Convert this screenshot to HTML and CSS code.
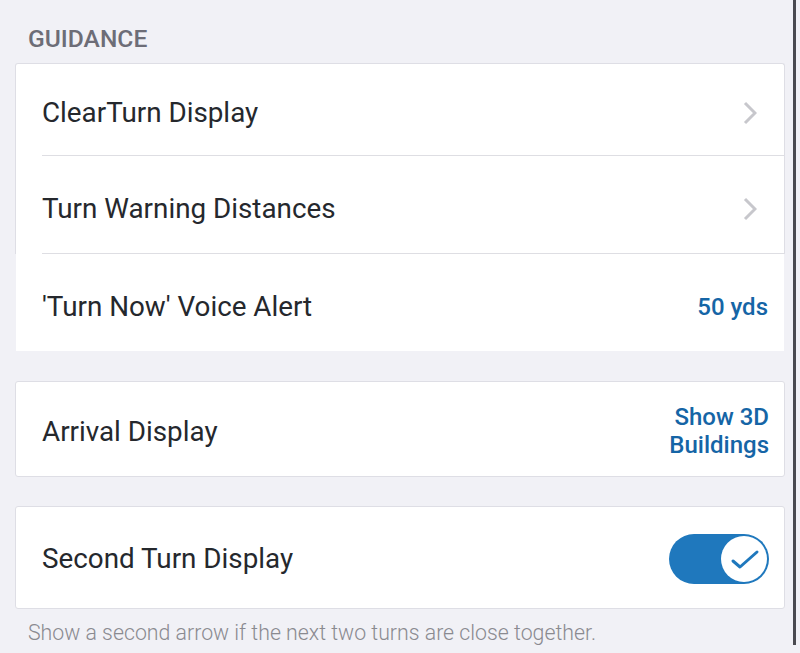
FILE: index.html
```html
<!DOCTYPE html>
<html>
<head>
<meta charset="utf-8">
<link rel="stylesheet" href="styles.css">
</head>
<body>
<div class="page">
  <div class="section-title">GUIDANCE</div>
  <div class="group">
    <div class="row row-first">
      <span class="label">ClearTurn Display</span>
      <svg class="chevron" width="14" height="24" viewBox="0 0 14 24"><polyline points="2,2 12,12 2,22" fill="none" stroke="#c7c7cc" stroke-width="3"/></svg>
    </div>
    <div class="row">
      <span class="label">Turn Warning Distances</span>
      <svg class="chevron" width="14" height="24" viewBox="0 0 14 24"><polyline points="2,2 12,12 2,22" fill="none" stroke="#c7c7cc" stroke-width="3"/></svg>
    </div>
  </div>
  <div class="plain-row">
    <span class="label">'Turn Now' Voice Alert</span>
    <span class="value">50 yds</span>
  </div>

  <div class="card card-arrival">
    <span class="label">Arrival Display</span>
    <span class="value value-multi">Show 3D<br>Buildings</span>
  </div>

  <div class="card card-second">
    <span class="label">Second Turn Display</span>
    <div class="toggle">
      <div class="knob">
        <svg width="46" height="46" viewBox="0 0 46 46"><polyline points="12,25 19,31 36,16" fill="none" stroke="#1f78bd" stroke-width="3" stroke-linecap="round" stroke-linejoin="round"/></svg>
      </div>
    </div>
  </div>
  <div class="footnote">Show a second arrow if the next two turns are close together.</div>
</div>
<div class="scrollbar"></div>
</body>
</html>
```

FILE: styles.css
```css
html, body {
  margin: 0;
  padding: 0;
  background: #f1f1f6;
  font-family: Roboto, "Liberation Sans", sans-serif;
  overflow: hidden;
}

.page {
  padding: 0 15px;
  height: 653px;
  box-sizing: border-box;
}

.section-title {
  padding: 24px 13px 9px;
  line-height: 30px;
  font-size: 24.6px;
  font-weight: 500;
  color: #6d6d77;
}

.group {
  background: #fff;
  border: 1px solid #dedee5;
  border-bottom: none;
  border-radius: 3px 3px 0 0;
}

.row {
  display: flex;
  align-items: center;
  justify-content: space-between;
  margin-left: 26px;
  height: 98px;
  padding: 9px 27px 0 0;
  box-sizing: border-box;
  border-bottom: 1px solid #dedee3;
}

.row-first {
  height: 92px;
  padding-top: 6px;
}

.label {
  font-size: 27.8px;
  color: #25282d;
  line-height: 32px;
}

.value {
  font-size: 24px;
  font-weight: 500;
  color: #1565a6;
  text-align: right;
  line-height: 28px;
}

.value-multi {
  margin-top: -2px;
}

.plain-row {
  display: flex;
  align-items: center;
  justify-content: space-between;
  margin: 0 1px;
  height: 97px;
  padding: 9px 16px 0 26px;
  box-sizing: border-box;
  background: #fff;
}

.card {
  display: flex;
  align-items: center;
  justify-content: space-between;
  background: #fff;
  border: 1px solid #dedee5;
  border-radius: 3px;
  padding: 0 15px 0 26px;
  box-sizing: border-box;
}

.card-arrival {
  margin-top: 30px;
  height: 96px;
  padding-top: 6px;
}

.card-second {
  margin-top: 29px;
  height: 103px;
  padding-top: 3px;
}

.toggle {
  width: 100px;
  height: 50px;
  border-radius: 25px;
  background: #1f78bd;
  display: flex;
  align-items: center;
  justify-content: flex-end;
  padding-right: 2px;
  box-sizing: border-box;
}

.knob {
  width: 46px;
  height: 46px;
  border-radius: 50%;
  background: #fff;
  display: flex;
}

.footnote {
  margin-top: 12px;
  padding-left: 13px;
  font-size: 21.3px;
  font-weight: 300;
  line-height: 24px;
  color: #8a8a90;
}

.scrollbar {
  position: absolute;
  top: 0;
  left: 793px;
  width: 3px;
  height: 645px;
  background: #4a4a50;
}
```
